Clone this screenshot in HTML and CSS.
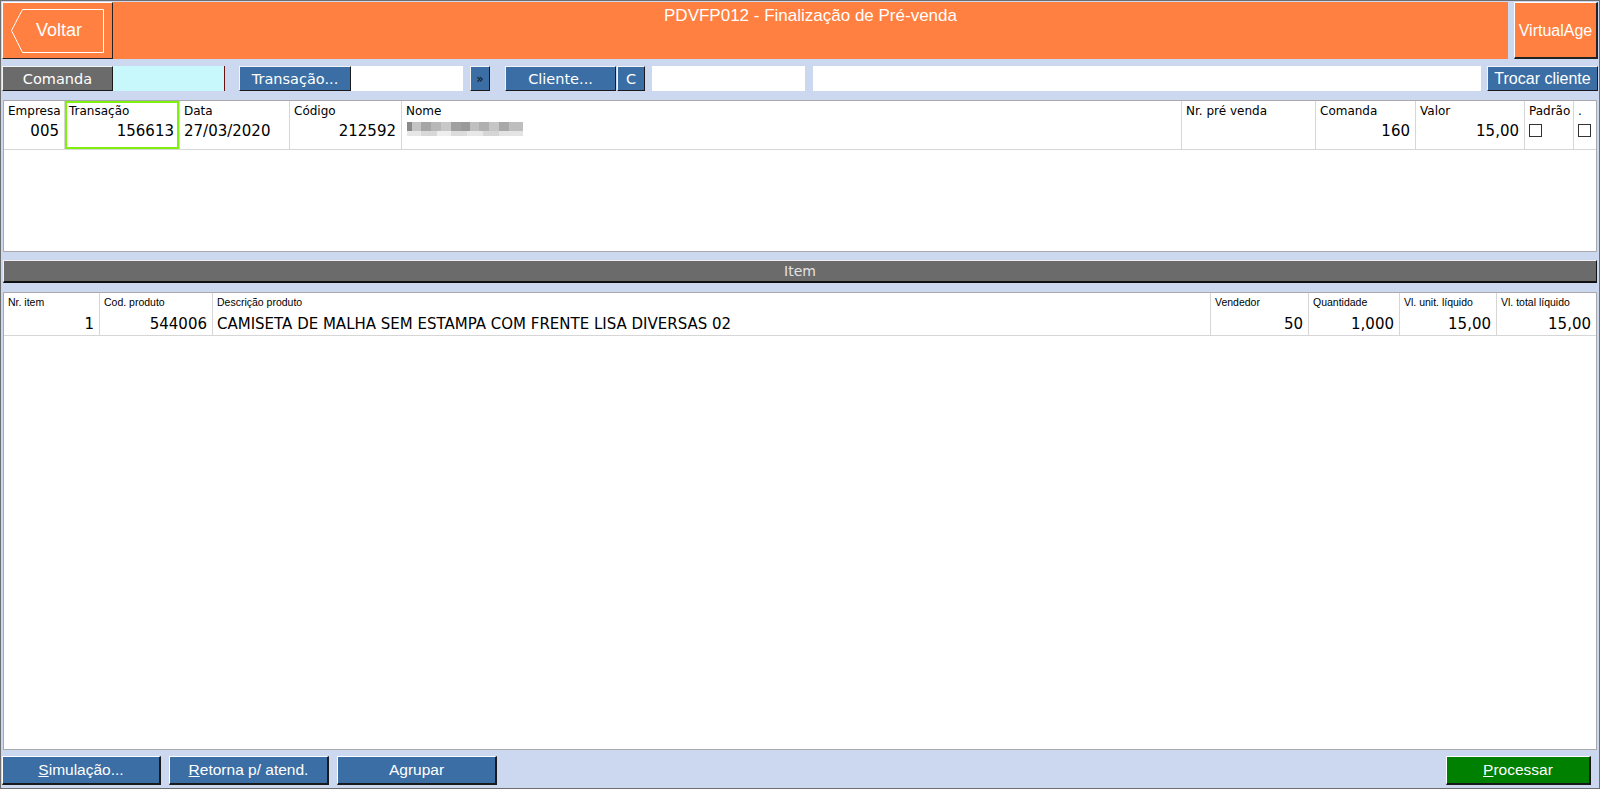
FILE: index.html
```html
<!DOCTYPE html>
<html lang="pt-BR">
<head>
    <meta charset="UTF-8">
    <title>PDVFP012 - Finalização de Pré-venda</title>
    <link rel="stylesheet" href="styles.css">
</head>
<body>
<div class="app">
    <div class="topbar">
        <div class="back">
            <svg class="back-shape" width="111" height="57" viewBox="0 0 111 57">
                <polygon points="20.5,7.5 101.5,7.5 101.5,50.5 20.5,50.5 9.5,28.5" fill="none" stroke="#fff" stroke-width="1"/>
            </svg>
            <span class="back-text">Voltar</span>
        </div>
        <div class="title">PDVFP012 - Finalização de Pré-venda</div>
        <div class="brand">VirtualAge</div>
    </div>

    <div class="toolbar">
        <span class="tbtn gray w111">Comanda</span>
        <span class="field cyan w112"></span>
        <span class="tbtn blue w112 ml14">Transação...</span>
        <span class="field w112"></span>
        <span class="tbtn blue small w20 ml7">&raquo;</span>
        <span class="tbtn blue w111 ml15">Cliente...</span>
        <span class="tbtn blue w28 ml1">C</span>
        <span class="field w153 ml7"></span>
        <span class="field grow ml8"></span>
        <span class="tbtn blue sans w111 ml6">Trocar cliente</span>
    </div>

    <div class="panel top-panel">
        <div class="row cols-a">
            <div class="cell"><div class="lbl">Empresa</div><div class="val num">005</div></div>
            <div class="cell focus"><div class="lbl">Transação</div><div class="val num">156613</div></div>
            <div class="cell"><div class="lbl">Data</div><div class="val">27/03/2020</div></div>
            <div class="cell"><div class="lbl">Código</div><div class="val num">212592</div></div>
            <div class="cell"><div class="lbl">Nome</div><div class="val"><span class="blur"></span></div></div>
            <div class="cell"><div class="lbl">Nr. pré venda</div><div class="val"></div></div>
            <div class="cell"><div class="lbl">Comanda</div><div class="val num">160</div></div>
            <div class="cell"><div class="lbl">Valor</div><div class="val num">15,00</div></div>
            <div class="cell"><div class="lbl">Padrão</div><div class="val box"><span class="check"></span></div></div>
            <div class="cell last"><div class="lbl">.</div><div class="val box"><span class="check"></span></div></div>
        </div>
    </div>

    <div class="bar">Item</div>

    <div class="panel item-panel">
        <div class="row cols-b">
            <div class="cell"><div class="lbl small">Nr. item</div><div class="val num">1</div></div>
            <div class="cell"><div class="lbl small">Cod. produto</div><div class="val num">544006</div></div>
            <div class="cell"><div class="lbl small">Descrição produto</div><div class="val">CAMISETA DE MALHA SEM ESTAMPA COM FRENTE LISA DIVERSAS 02</div></div>
            <div class="cell"><div class="lbl small">Vendedor</div><div class="val num">50</div></div>
            <div class="cell"><div class="lbl small">Quantidade</div><div class="val num">1,000</div></div>
            <div class="cell"><div class="lbl small">Vl. unit. líquido</div><div class="val num">15,00</div></div>
            <div class="cell last"><div class="lbl small">Vl. total líquido</div><div class="val num">15,00</div></div>
        </div>
    </div>

    <div class="footer">
        <span class="fbtn blue w159"><u>S</u>imulação...</span>
        <span class="fbtn blue w160 ml8"><u>R</u>etorna p/ atend.</span>
        <span class="fbtn blue w160 ml8">Agrupar</span>
        <span class="fbtn green w145 push"><u>P</u>rocessar</span>
    </div>
</div>
</body>
</html>
```

FILE: styles.css
```css
* { box-sizing: border-box; }
body { margin: 0; background: #ccd8ef; font-family: "DejaVu Sans", Verdana, sans-serif; }
.app { display: flex; flex-direction: column; width: 1600px; height: 789px; padding: 1px 1px 3px 1px; border: 1px solid #6e6e6e; background: #ccd8ef; }

/* cabecalho laranja */
.topbar { display: flex; height: 57px; flex: none; }
.back { display: grid; width: 111px; height: 57px; background: #ff8040; border-top: 1px solid #fff; border-left: 1px solid #fff; border-right: 1px solid #222; border-bottom: 1px solid #222; color: #fff; font-family: "Liberation Sans", Arial, sans-serif; font-size: 18px; }
.back-shape, .back-text { grid-area: 1 / 1; }
.back-shape { margin: -1px 0 0 -1px; }
.back-text { align-self: center; justify-self: center; padding-left: 2px; margin-top: -1px; }
.title { flex: 1; background: #ff8040; color: #fff; text-align: center; font-family: "Liberation Sans", Arial, sans-serif; font-size: 17px; line-height: 20px; padding-top: 4px; margin-right: 6px; }
.brand { display: flex; align-items: center; justify-content: center; width: 84px; background: #ff8040; color: #fff; font-family: "Liberation Sans", Arial, sans-serif; font-size: 16px; border-top: 1px solid #fff; border-left: 1px solid #fff; border-right: 2px solid #222; border-bottom: 2px solid #222; padding-top: 1px; }

/* barra de busca */
.toolbar { display: flex; height: 25px; margin-top: 7px; flex: none; }
.tbtn { display: flex; align-items: center; justify-content: center; height: 25px; color: #fff; font-size: 14.5px; border-top: 1px solid #f4f4f4; border-left: 1px solid #f4f4f4; border-right: 1px solid #1a1a1a; border-bottom: 1px solid #1a1a1a; white-space: nowrap; }
.tbtn.sans { font-family: "Liberation Sans", Arial, sans-serif; font-size: 16px; }
.tbtn.small { color: #111; font-size: 12px; }
.field { height: 25px; background: #fff; }
.field.cyan { background: #c8f8fc; border-right: 1px solid #6a1010; }
.grow { flex: 1; }
.blue { background: #3a6ea5; }
.gray { background: #6b6b6b; }
.green { background: #008000; }

.w20 { width: 20px; } .w28 { width: 28px; } .w111 { width: 111px; } .w112 { width: 112px; } .w145 { width: 145px; }
.w153 { width: 153px; } .w159 { width: 159px; } .w160 { width: 160px; }
.ml1 { margin-left: 1px; } .ml6 { margin-left: 6px; } .ml7 { margin-left: 7px; } .ml8 { margin-left: 8px; } .ml14 { margin-left: 14px; } .ml15 { margin-left: 15px; }

/* grades */
.panel { margin: 0 1px; background: #fff; border: 1px solid #a9a9a9; }
.top-panel { height: 152px; margin-top: 9px; flex: none; }
.item-panel { flex: 1; margin-top: 9px; }
.row { display: grid; border-bottom: 1px solid #d6d6d6; }
.cols-a { grid-template-columns: 61px 115px 110px 112px 780px 134px 100px 109px 49px 1fr; height: 49px; }
.cols-b { grid-template-columns: 96px 113px 998px 98px 91px 97px 1fr; height: 43px; }
.cell { border-right: 1px solid #d6d6d6; padding: 3px 5px 0 4px; overflow: hidden; white-space: nowrap; color: #000; }
.cell.last { border-right: none; }
.cell.focus { box-shadow: inset 0 0 0 2px #80f010; }
.lbl { font-size: 12px; line-height: 14px; }
.lbl.small { font-family: "Liberation Sans", Arial, sans-serif; font-size: 10.5px; line-height: 13px; }
.val { font-size: 15px; line-height: 18px; height: 18px; margin-top: 4px; }
.val.box { padding-top: 2px; }
.cols-b .val { margin-top: 6px; }
.val.num { text-align: right; }
.check { display: block; width: 13px; height: 13px; border: 1px solid #333; background: #fff; }
.blur { display: block; position: relative; width: 116px; height: 14px; margin-top: 3px; margin-left: 1px;
    background: linear-gradient(to right, #8a8a8a 0 5px, #c4c4c4 5px 14px, #a6a6a6 14px 24px, #b8b8b8 24px 34px, #c8c8c8 34px 44px, #a0a0a0 44px 54px, #9a9a9a 54px 63px, #c0c0c0 63px 72px, #b0b0b0 72px 82px, #c6c6c6 82px 92px, #a8a8a8 92px 102px, #bebebe 102px 116px); }
.blur::after { content: ""; position: absolute; left: 0; right: 0; bottom: 0; height: 5px;
    background: linear-gradient(to right, #e6e6e6 0 14px, #d8d8d8 14px 30px, #eeeeee 30px 44px, #dcdcdc 44px 60px, #e8e8e8 60px 76px, #d6d6d6 76px 92px, #e4e4e4 92px 116px); }

/* barra Item */
.bar { flex: none; height: 23px; margin: 8px 1px 0 1px; background: #6b6b6b; color: #e2e2e2; text-align: center; font-size: 14px; line-height: 20px; border-top: 1px solid #f0f0f0; border-left: 1px solid #f0f0f0; border-right: 1px solid #111; border-bottom: 2px solid #111; }

/* rodape */
.footer { display: flex; height: 29px; margin-top: 6px; flex: none; padding-right: 7px; }
.fbtn { display: flex; align-items: center; justify-content: center; height: 29px; color: #fff; font-family: "Liberation Sans", Arial, sans-serif; font-size: 15.5px; border-top: 1px solid #fff; border-left: 1px solid #fff; border-right: 2px solid #1a1a1a; border-bottom: 2px solid #1a1a1a; white-space: nowrap; }
.push { margin-left: auto; }
```
